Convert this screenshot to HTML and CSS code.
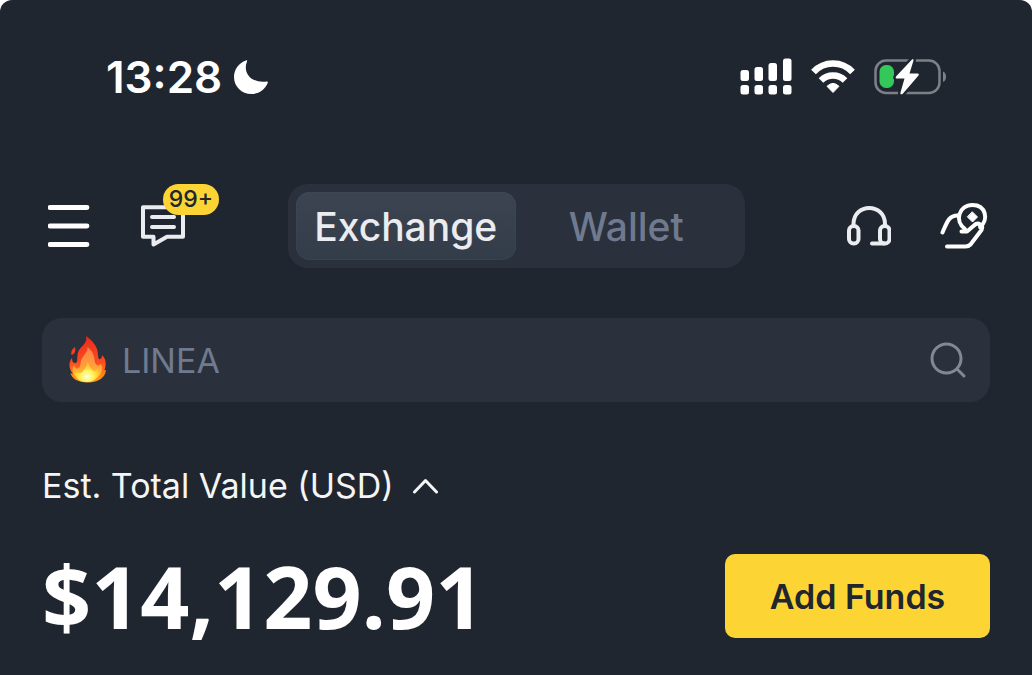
FILE: index.html
```html
<!DOCTYPE html>
<html lang="en">
<head>
<meta charset="utf-8">
<meta name="viewport" content="width=device-width, initial-scale=1">
<title>Exchange</title>
<link rel="stylesheet" href="styles.css">
</head>
<body>
<div class="screen">
  <div class="status">
    <div class="status-left">
      <time class="clock">13:28</time>
      <svg class="moon" width="34" height="34" viewBox="234 60 34 34" aria-hidden="true"><path fill="#fff" d="M246 60.600C247 60 247.500 60.500 247 61.500C242.500 72.500 251 83.500 266.500 81.500C267.700 81.200 268.200 82 267.700 83C264.500 90 258.500 94 251.500 94C241.500 94 234 86.500 234 77C234 69.500 239 63 246 60.600Z"/></svg>
    </div>
    <div class="status-right">
      <svg width="52" height="38" viewBox="740 58 52 38" fill="#fff" aria-hidden="true">
        <rect x="740.500" y="70" width="8.500" height="11" rx="2.500"/><rect x="754.500" y="67" width="8.500" height="14" rx="2.500"/><rect x="768.500" y="63" width="8.500" height="18" rx="2.500"/><rect x="783" y="58.500" width="8.500" height="22.500" rx="2.500"/>
        <rect x="740.500" y="85" width="8.500" height="9.500" rx="2.500"/><rect x="754.500" y="85" width="8.500" height="9.500" rx="2.500"/><rect x="768.500" y="85" width="8.500" height="9.500" rx="2.500"/><rect x="783" y="85" width="8.500" height="9.500" rx="2.500"/>
      </svg>
      <svg width="44" height="38" viewBox="811 58 44 38" aria-hidden="true">
        <g fill="none" stroke="#fff" stroke-width="6.500"><path d="M813.500 72Q821.500 63.500 833 63.500T852.500 72"/><path d="M821 80.500Q826 75.500 833 75.500T845 80.500"/></g>
        <path fill="#fff" stroke="#fff" stroke-linejoin="round" d="M827 86.300Q833 80.500 839 86.300L833 92.500Z"/>
      </svg>
      <svg width="72" height="38" viewBox="874 58 72 38" aria-hidden="true">
        <rect x="875.500" y="60.500" width="64" height="32.500" rx="10.500" fill="none" stroke="#7d8087" stroke-width="2.500"/>
        <path fill="#7d8087" d="M943 71.500C947 73 947 80.500 943 82Z"/>
        <rect x="879.500" y="65" width="14.500" height="23" rx="6.500" fill="#34c759"/>
        <path fill="#fff" stroke="#202630" stroke-width="5" stroke-linejoin="round" paint-order="stroke" d="M912 59.500L896 76.500Q895 78.500 897 78.500H904.500L900.500 92.500C900 94.500 901.500 95 903 93.500L918.500 75.500Q919.500 73.500 917.500 73.500H909.500L913.500 60.500Q913.500 58 912 59.500Z"/>
      </svg>
    </div>
  </div>

  <header class="toolbar">
    <div class="tools">
      <button class="icon-button" aria-label="Menu"><svg width="42" height="48" viewBox="48 202 42 48" fill="none" stroke="#fff" stroke-width="4.800" stroke-linecap="round"><path d="M50 207.500H87M50 226H87M50 244.500H87"/></svg></button>
      <button class="icon-button messages" aria-label="Messages, 99+ unread">
        <svg width="48" height="48" viewBox="139 202 48 48" fill="none" stroke="#eaecef" stroke-width="4" stroke-linejoin="round" stroke-linecap="round"><path d="M143 207.200H183V236.700H167L153.500 244.500V236.700H143Z"/><path d="M152 217H174M152 227H174"/></svg>
        <span class="badge">99+</span>
      </button>
    </div>
    <nav class="segments" aria-label="Account view">
      <button class="segment active" aria-current="page">Exchange</button>
      <button class="segment">Wallet</button>
    </nav>
    <div class="tools tools-end">
      <button class="icon-button" aria-label="Support"><svg width="46" height="48" viewBox="845 202 46 48" fill="none" stroke="#eaecef" stroke-width="4" stroke-linecap="round"><rect x="849" y="226" width="9.500" height="17.500" rx="4.500"/><rect x="880" y="226" width="9.500" height="17.500" rx="4.500"/><path d="M853.500 225V224C853.500 202.500 885 202.500 885 224V225M872 243.500H884"/></svg></button>
      <button class="icon-button" aria-label="Earn"><svg width="48" height="48" viewBox="940 202 48 48" fill="none" stroke="#fff" stroke-width="4" stroke-linecap="round" stroke-linejoin="round"><path d="M942.500 232.500C947 222 949 215.500 957.500 215.500"/><path d="M965 229C954 221 959 205 972.500 205C986 205 989 220 980 227"/><path fill="#fff" stroke-width="1" d="M972.500 212L977.500 217L972.500 222L967.500 217Z"/><path d="M961.500 231.500H967L974 225.500C978 221.500 984 225 981.500 230L970.500 244.500Q968.500 246.500 965.500 246.500H947"/></svg></button>
    </div>
  </header>

  <form class="search" role="search">
    <svg class="flame" width="38" height="48" viewBox="69 336 38 48" aria-hidden="true">
      <defs>
        <linearGradient id="outer" x1="0" y1="0" x2="0" y2="1"><stop offset="0" stop-color="#e92c20"/><stop offset=".55" stop-color="#fb4a20"/><stop offset="1" stop-color="#ffa51e"/></linearGradient>
        <linearGradient id="middle" x1="0" y1="0" x2="0" y2="1"><stop offset="0" stop-color="#ff7f48"/><stop offset=".55" stop-color="#ffa03c"/><stop offset="1" stop-color="#ffdc22"/></linearGradient>
        <radialGradient id="core" cx=".5" cy=".72" r=".55"><stop offset="0" stop-color="#fffee0"/><stop offset=".5" stop-color="#fff45c"/><stop offset="1" stop-color="#ffc525"/></radialGradient>
      </defs>
      <path fill="url(#outer)" d="M86 336C93 341 98 347 98 355C98 358 99 360 100 359C102 358 102 357 102 355C107 360 106 365 104.500 370C106 370 106 370 106 369C106 377 99 382.500 87.500 382.500C78 382.500 71 378 70.500 373L73 374C68 368 69 361 72 358C72 361 73 363 75 363C79 363 76 357 78.500 351C81 346 88 343 86 336ZM75 347C71 350 71 352 71.500 355C75 354 76 351 75 347Z"/>
      <path fill="url(#middle)" d="M87.500 347C92 351 94 354 94.500 360C95 365 98 367 101 364C104 369 101 380 87 381.500C75 381 70 371 74 365C76 371 80 369 80.500 364C81 356 88 353 87.500 347Z"/>
      <path fill="url(#core)" d="M87.500 362C90 366 91 370 94 371C97 371 97 369 98 368C100 375 96 382 87 382C78 382 74 377 76 371C78 374 81 374 83 371C86 368 87 365 87.500 362Z"/>
    </svg>
    <input class="search-input" type="text" aria-label="Search" placeholder="LINEA">
    <button class="icon-button" type="button" aria-label="Run search"><svg width="38" height="38" viewBox="929 341 38 38" fill="none" stroke="#848891" stroke-width="3" stroke-linecap="round"><circle cx="946.500" cy="358.500" r="14.500"/><path d="M957 369L964 376"/></svg></button>
  </form>

  <main class="balance">
    <button class="balance-label" aria-expanded="true">Est. Total Value (USD)
      <svg width="26" height="18" viewBox="412 477 26 18" fill="none" stroke="#f5f5f5" stroke-width="3" stroke-linecap="round" stroke-linejoin="round" aria-hidden="true"><path d="M414.500 492L425.500 480.500L436.500 492"/></svg>
    </button>
    <div class="balance-row">
      <strong class="amount">$14,129.91</strong>
      <button class="add-funds">Add Funds</button>
    </div>
  </main>
</div>
</body>
</html>
```
FILE: styles.css
```css
* { box-sizing: border-box; }

body {
  margin: 0;
  background: #fff;
  font-family: Inter, "Liberation Sans", sans-serif;
}

button, input {
  margin: 0;
  padding: 0;
  border: 0;
  background: none;
  color: inherit;
  font: inherit;
}

button { cursor: pointer; }
svg { display: block; flex: none; }

.screen {
  min-height: 100vh;
  padding: 48px 42px 36px;
  border-radius: 12px 12px 0 0;
  background: #202630;
  color: #fff;
}

.status {
  display: flex;
  align-items: center;
  justify-content: space-between;
  height: 58px;
  padding: 0 44px 0 64px;
}

.status-left { display: flex; align-items: center; gap: 12px; }
.status-right { display: flex; align-items: center; gap: 19px; }

.clock {
  font-size: 44px;
  font-weight: 600;
  line-height: 58px;
}

.toolbar {
  display: grid;
  grid-template-columns: 1fr auto 1fr;
  align-items: center;
  margin-top: 78px;
}

.tools { display: flex; gap: 49px; padding-left: 6px; }
.tools-end { justify-content: flex-end; padding: 0 2px 0 0; }

.messages { position: relative; }

.badge {
  position: absolute;
  top: -18px;
  left: 24px;
  width: 56px;
  border-radius: 16px;
  background: #fcd535;
  color: #202630;
  font-size: 23px;
  font-weight: 500;
  line-height: 31px;
  text-align: center;
}

.segments {
  display: flex;
  width: 457px;
  height: 84px;
  padding: 8px;
  border-radius: 20px;
  background: #2a313c;
}

.segment {
  flex: 1;
  border-radius: 14px;
  color: #707a8f;
  font-size: 39px;
  font-weight: 500;
}

.segment.active {
  background: linear-gradient(#3b4450, #333d49);
  box-shadow: inset 0 0 2px #46505c;
  color: #eaecef;
}

.search {
  display: flex;
  align-items: center;
  height: 84px;
  margin-top: 50px;
  padding: 0 23px 0 27px;
  border-radius: 20px;
  background: #2a313c;
}

.search-input {
  flex: 1;
  min-width: 0;
  margin-left: 15px;
  outline: 0;
  color: #eaecef;
  font-size: 34px;
}

.search-input::placeholder { color: #707a8f; opacity: 1; }

.balance { margin-top: 60px; }

.balance-label {
  display: flex;
  align-items: center;
  gap: 18px;
  color: #f5f5f5;
  font-size: 34px;
  line-height: 48px;
}

.balance-row {
  display: flex;
  align-items: center;
  justify-content: space-between;
  margin-top: 44px;
}

.amount {
  font-family: "Open Sans", "Noto Sans", sans-serif;
  font-size: 86px;
  font-weight: 700;
  line-height: 84px;
}

.add-funds {
  width: 265px;
  height: 84px;
  border-radius: 10px;
  background: #fcd535;
  color: #202630;
  font-size: 34px;
  font-weight: 600;
}
```
